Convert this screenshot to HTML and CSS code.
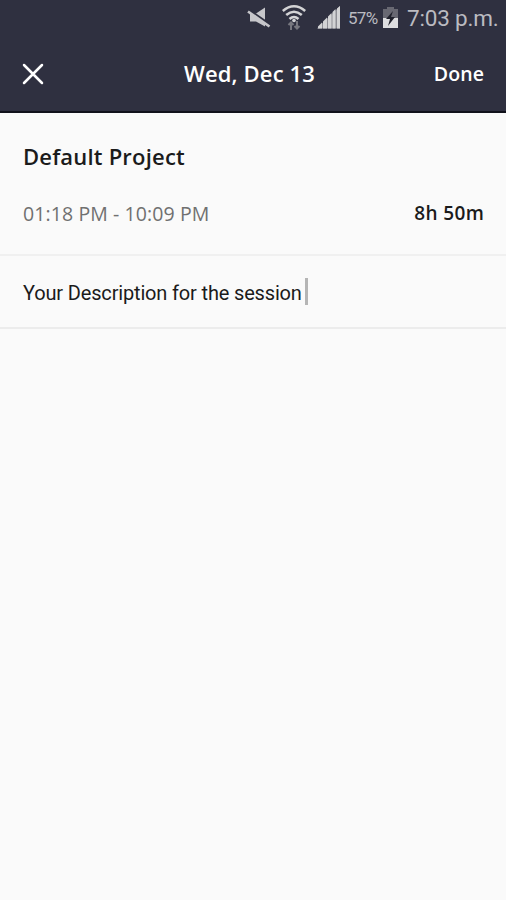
FILE: index.html
```html
<!DOCTYPE html>
<html lang="en">
<head>
<meta charset="utf-8">
<title>Session</title>
<link rel="stylesheet" href="styles.css">
</head>
<body>
<div class="status">
  <svg class="mute" width="24" height="24" viewBox="0 0 24 24">
    <path d="M3 7.500h6l9-6v19l-9-5H3z" fill="#c6c6ca"/>
    <path d="M1 3.500l22 15.500" stroke="#2f3040" stroke-width="3"/>
    <path d="M1 5.500l21.500 15" stroke="#c6c6ca" stroke-width="2.600"/>
  </svg>
  <svg class="wifi" width="24" height="28" viewBox="0 0 24 28">
    <path d="M.8 7Q12-2.500 23.200 7M4.200 11Q12 4.500 19.800 11M7.500 15Q12 11 16.500 15" fill="none" stroke="#d3d3d5" stroke-width="2.600"/>
    <circle cx="12" cy="16.500" r="1.800" fill="#d3d3d5"/>
    <path d="M9 26v-8m-2.500 3L9 18.500l2.500 2.500M15 17v8m-2.500-3l2.500 2.500 2.500-2.500" fill="none" stroke="#77777f" stroke-width="2"/>
  </svg>
  <svg class="signal" width="24" height="24" viewBox="0 0 24 24">
    <path d="M0 22.500L23 0v22.500z" fill="#8e8e95"/>
    <path d="M1 22.500v-2l4-4v6zM6 22.500v-7l4-4v11zM11 22.500v-12l3.500-3.500v15.500zM15.500 22.500V6l3-3v19.500zM20 22.500v-20L23 0v22.500z" fill="#d3d3d5"/>
  </svg>
  <span class="percent">57%</span>
  <svg class="battery" width="15" height="24" viewBox="0 0 15 24">
    <path d="M0 3h4V1h7v2h4v9H0z" fill="#686872"/>
    <path d="M0 12h15v10H0z" fill="#dedee0"/>
    <path d="M10 5L3 13h4l-2 7 7-9H8z" fill="#20212c"/>
  </svg>
  <span class="clock">7:03 p.m.</span>
</div>
<header class="bar">
  <svg class="close" width="22" height="22" viewBox="0 0 22 22"><path d="M2 2l18 18M20 2L2 20" stroke="#fff" stroke-width="2.500" stroke-linecap="round"/></svg>
  <h1 class="title">Wed, Dec 13</h1>
  <span class="done">Done</span>
</header>
<main>
  <section class="session">
    <h2 class="project">Default Project</h2>
    <div class="times">
      <span class="range">01:18 PM - 10:09 PM</span>
      <span class="duration">8h 50m</span>
    </div>
  </section>
  <section class="note"><span class="description">Your Description for the session</span><i class="caret"></i></section>
</main>
</body>
</html>
```
FILE: styles.css
```css
* { box-sizing: border-box; }
body { margin: 0; height: 900px; overflow: hidden; background: #fafafa; font-family: "Open Sans", sans-serif; color: #1b1b1b; }
svg { display: block; flex: none; }
span, h1, h2 { white-space: nowrap; }
.status { height: 36px; background: #2f3040; display: flex; align-items: center; justify-content: flex-end; padding-right: 8px; font-family: Roboto, sans-serif; color: #bbbbc1; }
.mute { margin-right: 11px; }
.wifi { margin-right: 11px; }
.signal { margin-right: 7px; }
.percent { width: 31px; font-size: 17px; letter-spacing: -0.7px; }
.battery { margin: 0 9px 0 4px; }
.clock { width: 91px; font-size: 22.5px; letter-spacing: -0.2px; }
.bar { height: 77px; background: #2f3040; border-bottom: 2px solid #11121b; display: grid; grid-template-columns: 1fr auto 1fr; align-items: center; padding: 0 22px; color: #fff; }
.title { margin: 0 7px 2px 0; font-size: 22px; letter-spacing: 0.15px; font-weight: 600; }
.done { justify-self: end; font-size: 19.5px; letter-spacing: 0.1px; font-weight: 600; }
.session { height: 143px; border-bottom: 2px solid #f0f0f0; padding: 28px 22px 0 23px; }
.project { margin: 0; font-size: 22px; line-height: 30px; font-weight: 600; letter-spacing: 0.2px; }
.times { display: flex; justify-content: space-between; margin-top: 28px; line-height: 28px; }
.range { font-size: 19.5px; line-height: 30px; letter-spacing: 0.1px; color: #707070; }
.duration { font-size: 19px; letter-spacing: 0.4px; margin-right: -0.4px; font-weight: 600; }
.note { height: 73px; border-bottom: 2px solid #ececec; display: flex; align-items: center; padding-left: 23px; font-family: Roboto, sans-serif; font-size: 20px; }
.description { letter-spacing: -0.16px; padding-top: 2px; }
.caret { width: 3px; height: 27px; margin-left: 3px; background: #b5b5b5; }
```
